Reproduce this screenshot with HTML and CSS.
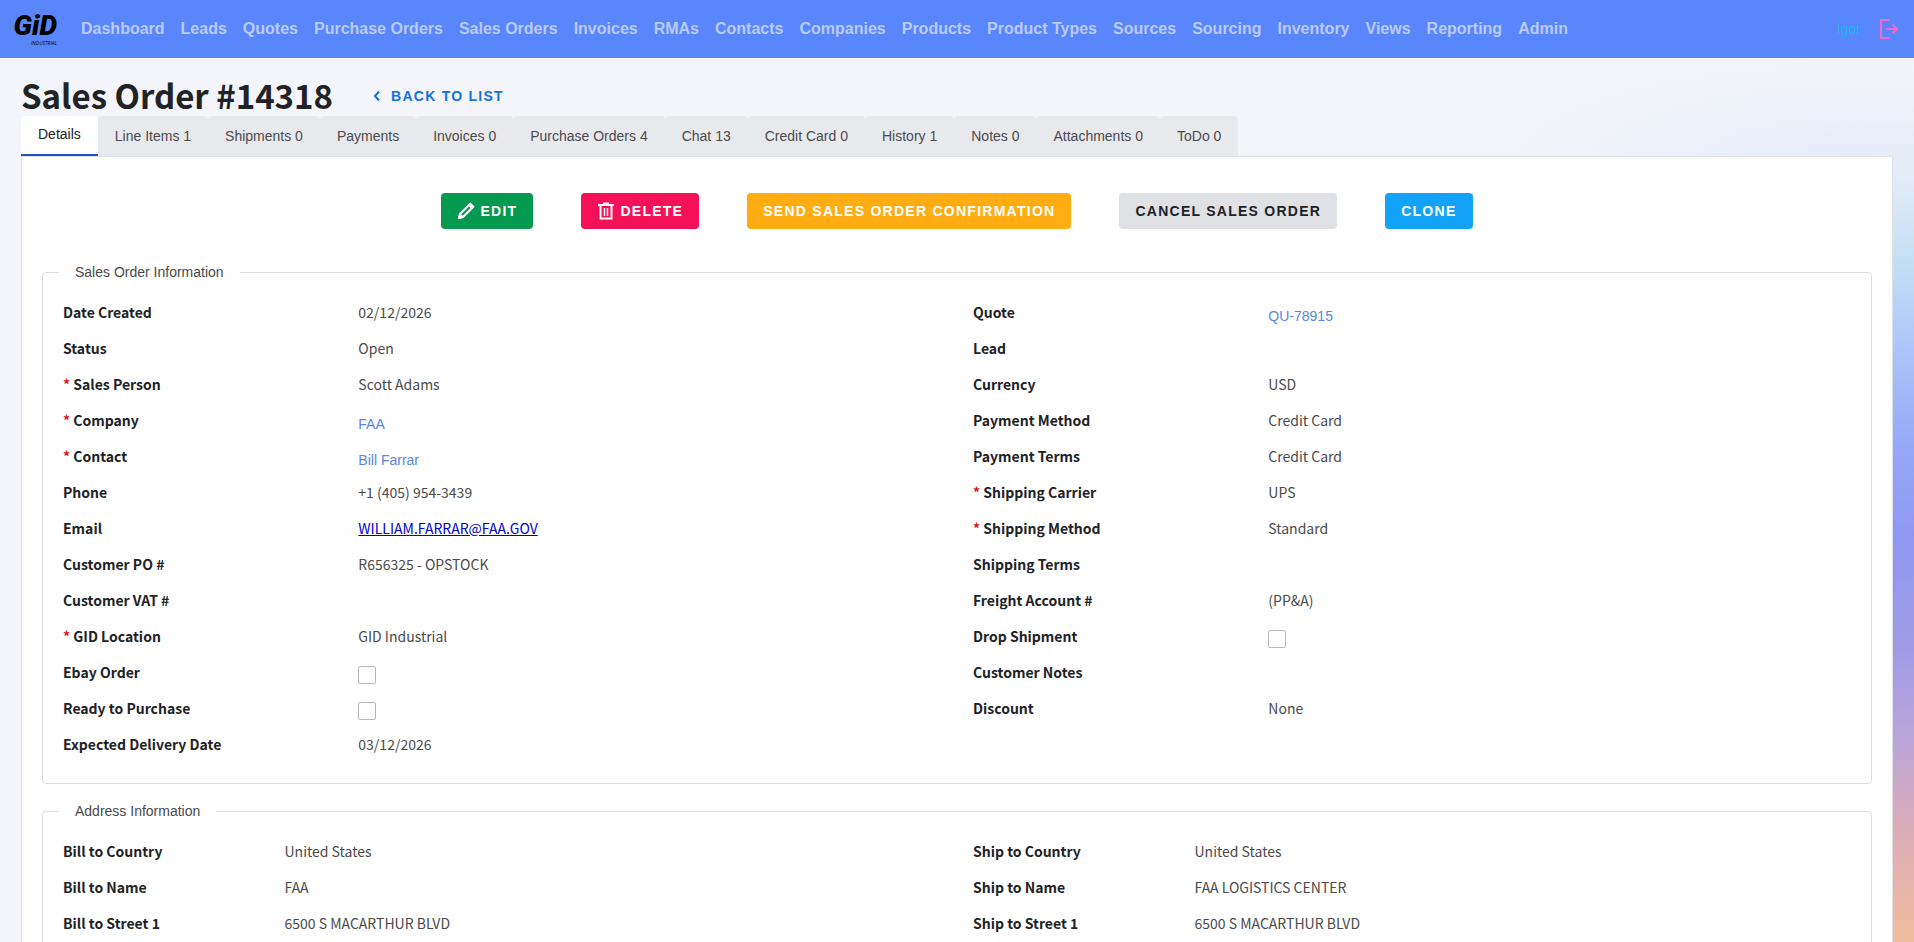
FILE: index.html
```html
<!DOCTYPE html>
<html lang="en">
<head>
<meta charset="utf-8">
<title>Sales Order #14318</title>
<link rel="stylesheet" href="styles.css">
</head>
<body>
<header class="topbar">
  <a class="logo" href="#" aria-label="GID Industrial">
    <span class="logo-name">GiD</span>
    <span class="logo-sub">INDUSTRIAL</span>
  </a>
  <nav class="nav">
    <a href="#">Dashboard</a><a href="#">Leads</a><a href="#">Quotes</a><a href="#">Purchase Orders</a><a href="#">Sales Orders</a><a href="#">Invoices</a><a href="#">RMAs</a><a href="#">Contacts</a><a href="#">Companies</a><a href="#">Products</a><a href="#">Product Types</a><a href="#">Sources</a><a href="#">Sourcing</a><a href="#">Inventory</a><a href="#">Views</a><a href="#">Reporting</a><a href="#">Admin</a>
  </nav>
  <div class="user">
    <a class="user-name" href="#">Igor</a>
    <button class="logout" type="button" aria-label="Log out">
      <svg width="20" height="22" viewBox="0 0 20 22" fill="none" stroke="currentColor" stroke-width="2"><path d="M10.500 2H2v18h8.500M7 11h11M13.500 6.500 18 11l-4.500 4.500"/></svg>
    </button>
  </div>
</header>

<main class="page">
  <div class="heading">
    <h1>Sales Order #14318</h1>
    <a class="back" href="#">
      <svg width="8" height="12" viewBox="0 0 8 12" fill="none" stroke="currentColor" stroke-width="2"><path d="M6 1.500 2 6l4 4.500"/></svg>
      BACK TO LIST
    </a>
  </div>

  <div class="tabs" role="tablist">
    <button class="tab active" role="tab" aria-selected="true">Details</button>
    <button class="tab" role="tab">Line Items 1</button>
    <button class="tab" role="tab">Shipments 0</button>
    <button class="tab" role="tab">Payments</button>
    <button class="tab" role="tab">Invoices 0</button>
    <button class="tab" role="tab">Purchase Orders 4</button>
    <button class="tab" role="tab">Chat 13</button>
    <button class="tab" role="tab">Credit Card 0</button>
    <button class="tab" role="tab">History 1</button>
    <button class="tab" role="tab">Notes 0</button>
    <button class="tab" role="tab">Attachments 0</button>
    <button class="tab" role="tab">ToDo 0</button>
  </div>

  <section class="panel">
    <div class="actions">
      <button class="btn green" type="button">
        <svg width="18" height="18" viewBox="0 0 18 18" fill="none" stroke="currentColor" stroke-width="2" stroke-linejoin="round"><path d="M2 16l1-4L12.500 2.500l3 3L6 15z"/><path d="M11 3l2.500-2 3.500 3.500-2 2.500z" fill="currentColor" stroke-width="1"/><path d="M3 12.500l2.500 2.500L2 16z" fill="currentColor"/></svg>
        EDIT
      </button>
      <button class="btn red" type="button">
        <svg width="18" height="18" viewBox="0 0 18 18" fill="none" stroke="currentColor" stroke-width="2"><path d="M1 3h16M6 1.500h6M3.500 4v12.500h11V4"/><path d="M7.500 6v8M10.500 6v8" stroke-width="1.500"/></svg>
        DELETE
      </button>
      <button class="btn amber" type="button">SEND SALES ORDER CONFIRMATION</button>
      <button class="btn grey" type="button">CANCEL SALES ORDER</button>
      <button class="btn blue" type="button">CLONE</button>
    </div>

    <fieldset class="group">
      <legend>Sales Order Information</legend>
      <div class="columns">
        <dl class="fields">
          <div class="row"><dt>Date Created</dt><dd>02/12/2026</dd></div>
          <div class="row"><dt>Status</dt><dd>Open</dd></div>
          <div class="row"><dt class="required">Sales Person</dt><dd>Scott Adams</dd></div>
          <div class="row"><dt class="required">Company</dt><dd><a class="link" href="#">FAA</a></dd></div>
          <div class="row"><dt class="required">Contact</dt><dd><a class="link" href="#">Bill Farrar</a></dd></div>
          <div class="row"><dt>Phone</dt><dd>+1 (405) 954-3439</dd></div>
          <div class="row"><dt>Email</dt><dd><a class="mail" href="mailto:WILLIAM.FARRAR@FAA.GOV">WILLIAM.FARRAR@FAA.GOV</a></dd></div>
          <div class="row"><dt>Customer PO #</dt><dd>R656325 - OPSTOCK</dd></div>
          <div class="row"><dt>Customer VAT #</dt><dd></dd></div>
          <div class="row"><dt class="required">GID Location</dt><dd>GID Industrial</dd></div>
          <div class="row"><dt><label for="ebay">Ebay Order</label></dt><dd><input class="check" type="checkbox" id="ebay"></dd></div>
          <div class="row"><dt><label for="ready">Ready to Purchase</label></dt><dd><input class="check" type="checkbox" id="ready"></dd></div>
          <div class="row"><dt>Expected Delivery Date</dt><dd>03/12/2026</dd></div>
        </dl>
        <dl class="fields">
          <div class="row"><dt>Quote</dt><dd><a class="link" href="#">QU-78915</a></dd></div>
          <div class="row"><dt>Lead</dt><dd></dd></div>
          <div class="row"><dt>Currency</dt><dd>USD</dd></div>
          <div class="row"><dt>Payment Method</dt><dd>Credit Card</dd></div>
          <div class="row"><dt>Payment Terms</dt><dd>Credit Card</dd></div>
          <div class="row"><dt class="required">Shipping Carrier</dt><dd>UPS</dd></div>
          <div class="row"><dt class="required">Shipping Method</dt><dd>Standard</dd></div>
          <div class="row"><dt>Shipping Terms</dt><dd></dd></div>
          <div class="row"><dt>Freight Account #</dt><dd>(PP&amp;A)</dd></div>
          <div class="row"><dt><label for="drop">Drop Shipment</label></dt><dd><input class="check" type="checkbox" id="drop"></dd></div>
          <div class="row"><dt>Customer Notes</dt><dd></dd></div>
          <div class="row"><dt>Discount</dt><dd>None</dd></div>
        </dl>
      </div>
    </fieldset>

    <fieldset class="group address">
      <legend>Address Information</legend>
      <div class="columns">
        <dl class="fields">
          <div class="row"><dt>Bill to Country</dt><dd>United States</dd></div>
          <div class="row"><dt>Bill to Name</dt><dd>FAA</dd></div>
          <div class="row"><dt>Bill to Street 1</dt><dd>6500 S MACARTHUR BLVD</dd></div>
        </dl>
        <dl class="fields">
          <div class="row"><dt>Ship to Country</dt><dd>United States</dd></div>
          <div class="row"><dt>Ship to Name</dt><dd>FAA LOGISTICS CENTER</dd></div>
          <div class="row"><dt>Ship to Street 1</dt><dd>6500 S MACARTHUR BLVD</dd></div>
        </dl>
      </div>
    </fieldset>
  </section>
</main>
</body>
</html>
```

FILE: styles.css
```css
* { box-sizing: border-box; }

html { scrollbar-width: none; }

body {
  margin: 0;
  min-height: 100vh;
  font-family: "Liberation Sans", Arial, sans-serif;
  font-size: 14px;
  line-height: 20px;
  color: #4a4a4a;
  background:
    linear-gradient(#e5edf800 120px, #e5edf8 170px, #c4dff5 260px, #afc8f9 340px, #98a9f8 440px, #8f98f1 540px, #a19be6 650px, #b9a5d8 740px, #cfa8c6 790px, #e3b0b0 860px, #eebc9c 942px) right top / 22px 942px no-repeat,
    radial-gradient(ellipse 360px 110px at calc(100% - 60px) 170px, #e3ebf8, #f3f5fa00) no-repeat,
    #f3f5fa;
}

a { text-decoration: none; }
button { font: inherit; border: 0; cursor: pointer; }

.topbar {
  display: flex;
  align-items: center;
  height: 58px;
  padding: 0 15px 0 13px;
  background: #5a86fb;
}

.logo {
  display: flex;
  flex-direction: column;
  align-items: flex-end;
  width: 44px;
  color: #000;
  font-style: italic;
}
.logo-name {
  font-family: Roboto, sans-serif;
  font-size: 28px;
  font-weight: 900;
  line-height: 28px;
}
.logo-sub { font-size: 5px; line-height: 6px; font-family: "Open Sans", sans-serif; }

.nav {
  display: flex;
  flex: 1;
  gap: 16px;
  padding-left: 24px;
  font-size: 16px;
  font-weight: 700;
  white-space: nowrap;
}
.nav a { color: #b9cbff; }

.user { display: flex; align-items: center; gap: 18px; }
.user-name { color: #17b4f5; }
.logout { display: flex; padding: 0; background: none; color: #f567d0; }

.page { padding: 16px 21px 0; }

.heading { display: flex; align-items: center; gap: 40px; height: 42px; }

h1 {
  margin: 0;
  font-family: "Noto Sans CJK SC", "Noto Sans", sans-serif;
  font-size: 33px;
  font-weight: 600;
  line-height: 40px;
  color: #212225;
}

.back {
  display: flex;
  align-items: center;
  gap: 10px;
  padding-top: 2px;
  font-weight: 700;
  letter-spacing: 0.09em;
  color: #1072e0;
}

.tabs { display: flex; align-items: stretch; height: 40px; }
.tab {
  padding: 0 17px;
  border-radius: 4px 4px 0 0;
  background: #e8e9ed;
  color: #4a4a4d;
  white-space: nowrap;
}
.tab.active {
  padding-bottom: 2px;
  border-bottom: 2px solid #2454b8;
  background: #fff;
  color: #212225;
}

.panel {
  padding: 36px 20px 20px;
  border: 1px solid #e0e1e4;
  background: #fff;
}

.actions { display: flex; justify-content: center; gap: 48px; margin-bottom: 33px; }
.btn {
  display: flex;
  align-items: center;
  gap: 5px;
  height: 36px;
  padding: 0 16px;
  border-radius: 4px;
  font-weight: 700;
  letter-spacing: 0.09em;
  color: #fff;
}
.green { background: #049a50; }
.red { background: #f41157; }
.amber { background: #ffad12; }
.grey { background: #e0e1e5; color: #212225; }
.blue { background: #12a3f8; }

.group {
  min-width: 0;
  margin: 0 0 17px;
  padding: 12px 4px 21px;
  border: 1px solid #dedfe1;
  border-radius: 4px;
}
.group legend { margin-left: 12px; padding: 0 16px; }

.columns { display: grid; grid-template-columns: 1fr 1fr; }
.fields { margin: 0; padding: 0 16px; }

.row {
  display: grid;
  grid-template-columns: repeat(12, 1fr);
  column-gap: 8px;
  height: 36px;
  align-items: center;
  font-family: "Noto Sans CJK SC", "Noto Sans", sans-serif;
}
.row dt { grid-column: span 4; font-weight: 700; color: #212225; }
.row dd { grid-column: span 8; display: flex; margin: 0; }
.address dt { grid-column: span 3; }
.address dd { grid-column: span 9; }

.required::before { content: "* "; color: #e0131c; }

.link {
  padding-top: 8px;
  font-family: "Liberation Sans", Arial, sans-serif;
  color: #5a86e0;
}
.mail { color: #0000d0; text-decoration: underline; }

.check {
  appearance: none;
  width: 18px;
  height: 18px;
  margin: 5px 0 0;
  border: 1px solid #b8b8bb;
  border-radius: 2px;
  background: #fff;
}
```
